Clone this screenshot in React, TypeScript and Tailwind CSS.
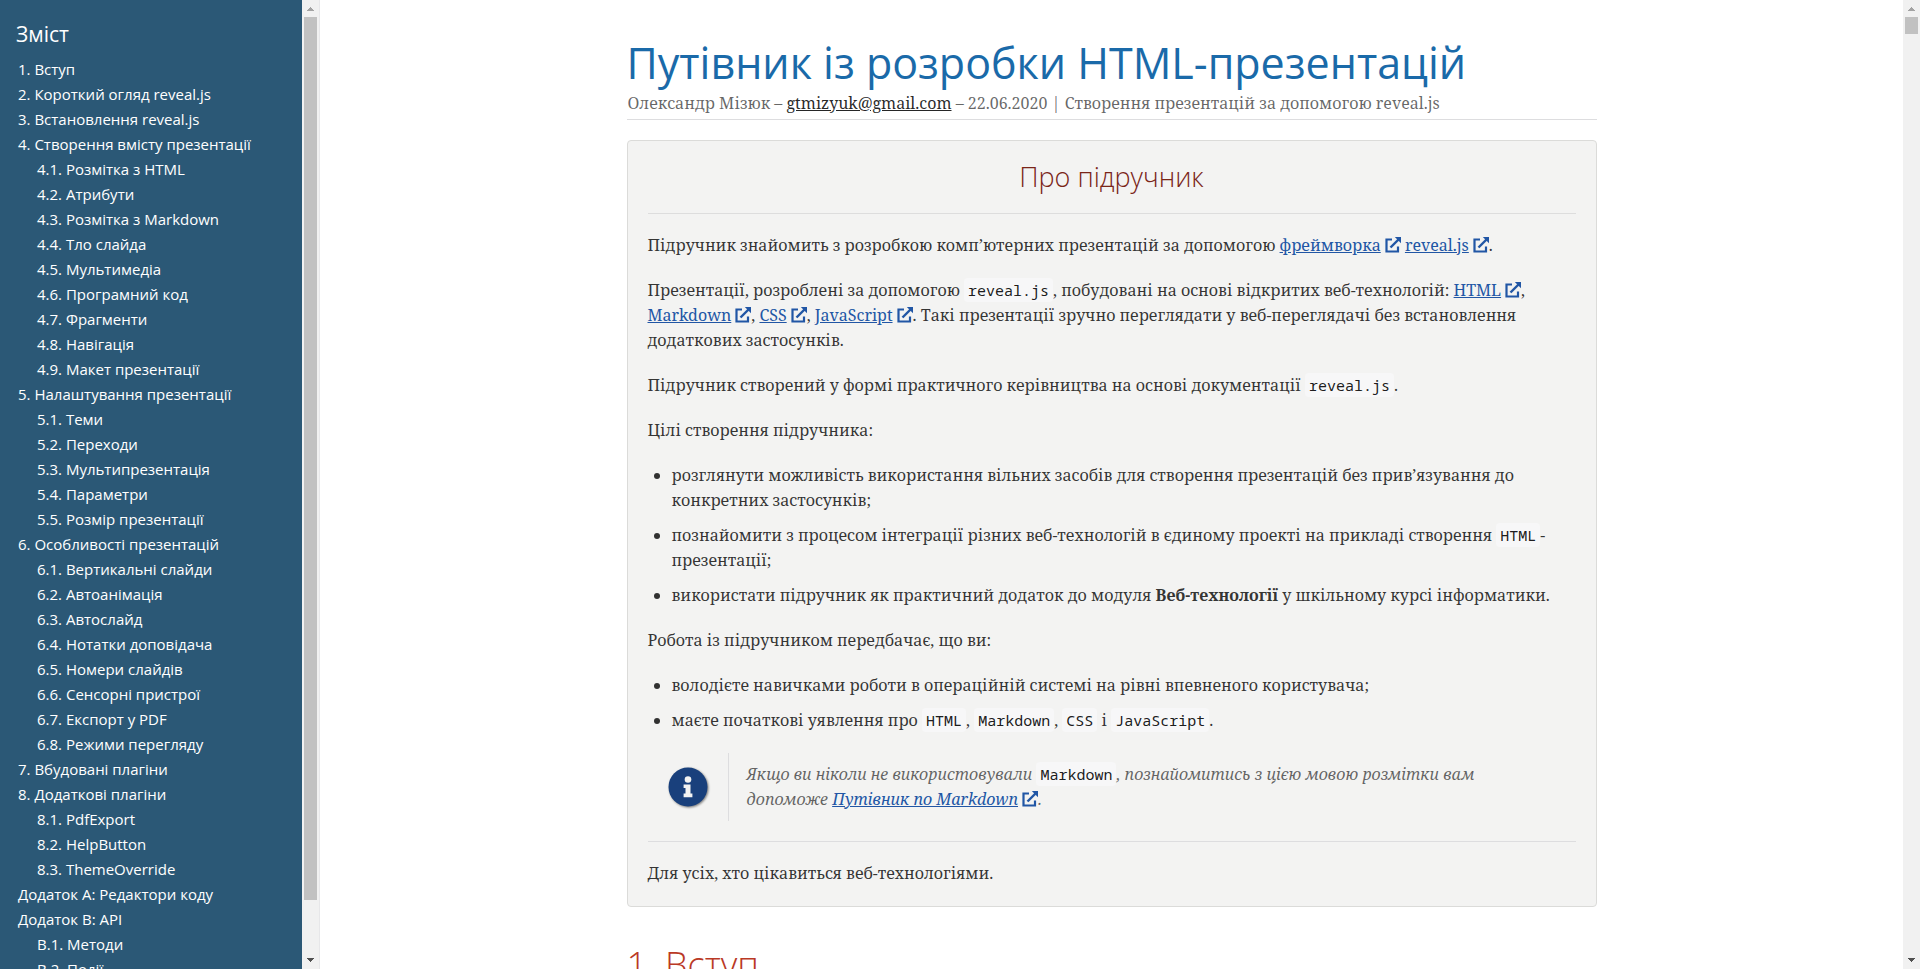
import type { ReactNode } from "react"

type TocItem = {
    title: string
    children?: string[]
}

const toc: TocItem[] = [
    { title: "1. Вступ" },
    { title: "2. Короткий огляд reveal.js" },
    { title: "3. Встановлення reveal.js" },
    {
        title: "4. Створення вмісту презентації",
        children: [
            "4.1. Розмітка з HTML",
            "4.2. Атрибути",
            "4.3. Розмітка з Markdown",
            "4.4. Тло слайда",
            "4.5. Мультимедіа",
            "4.6. Програмний код",
            "4.7. Фрагменти",
            "4.8. Навігація",
            "4.9. Макет презентації",
        ],
    },
    {
        title: "5. Налаштування презентації",
        children: ["5.1. Теми", "5.2. Переходи", "5.3. Мультипрезентація", "5.4. Параметри", "5.5. Розмір презентації"],
    },
    {
        title: "6. Особливості презентацій",
        children: [
            "6.1. Вертикальні слайди",
            "6.2. Автоанімація",
            "6.3. Автослайд",
            "6.4. Нотатки доповідача",
            "6.5. Номери слайдів",
            "6.6. Сенсорні пристрої",
            "6.7. Експорт у PDF",
            "6.8. Режими перегляду",
        ],
    },
    { title: "7. Вбудовані плагіни" },
    { title: "8. Додаткові плагіни", children: ["8.1. PdfExport", "8.2. HelpButton", "8.3. ThemeOverride"] },
    { title: "Додаток A: Редактори коду" },
    { title: "Додаток B: API", children: ["B.1. Методи", "B.2. Події"] },
]

const Code = ({ children }: { children: ReactNode }) => (
    <code className="rounded bg-[#f7f7f8] px-1 py-0.5 font-['Droid_Sans_Mono','Noto_Sans_Mono','DejaVu_Sans_Mono',monospace] text-[15px] leading-4 not-italic text-black/90">
        {children}
    </code>
)

const ExternalIcon = () => (
    <svg viewBox="0 0 16 16" className="ml-1 inline-block size-4 align-[-2px]" fill="none" stroke="currentColor" aria-hidden="true">
        <path d="M7 2.5H1.5v12h11.5V9.5" strokeWidth="2.2" />
        <path d="M5.5 10.5L13.5 2.5" strokeWidth="2.4" />
        <path d="M9.8 0H16v6.2z" fill="currentColor" stroke="none" />
    </svg>
)

const Ext = ({ href, children }: { href: string; children: ReactNode }) => (
    <a href={href} className="whitespace-nowrap text-[#2156a5]">
        <span className="underline">{children}</span>
        <ExternalIcon />
    </a>
)

const InfoIcon = () => (
    <svg viewBox="0 0 40 40" className="size-10 drop-shadow-[1px_1px_1px_rgba(0,0,0,0.5)]" aria-hidden="true">
        <circle cx="20" cy="20" r="19.5" fill="#19407c" />
        <circle cx="20" cy="12.5" r="3.3" fill="#f3f3f2" />
        <path d="M15.6 17.4h6.9v9.2h1.9v3.6h-8.8v-3.6h1.9v-5.6h-1.9z" fill="#f3f3f2" />
    </svg>
)

type ScrollBarProps = {
    thumb: string
    label: string
}

const ScrollBar = ({ thumb, label }: ScrollBarProps) => (
    <div className="flex h-full w-[17px] shrink-0 flex-col items-center bg-[#f1f1f1]" aria-label={label}>
        <svg viewBox="0 0 17 17" className="size-[17px] shrink-0" shapeRendering="crispEdges">
            <path d="M5 11h7L8.5 7z" fill="#a3a3a3" />
        </svg>
        <div className="flex w-full grow flex-col items-center">
            <div className={`w-[13px] bg-[#c1c1c1] ${thumb}`} />
        </div>
        <svg viewBox="0 0 17 17" className="size-[17px] shrink-0" shapeRendering="crispEdges">
            <path d="M5 6h7L8.5 10z" fill="#505050" />
        </svg>
    </div>
)

const Sidebar = () => (
    <aside className="flex w-80 shrink-0 border-r border-[#e7e7e9]">
        <nav className="grow overflow-hidden bg-[#2b5876] px-4 pt-5 font-['Open_Sans',sans-serif] text-white">
            <h2 className="mb-2 text-[21px] leading-[29px]">Зміст</h2>
            <ul className="pl-0.5 text-[15px] leading-[25px]">
                {toc.map((item) => (
                    <li key={item.title}>
                        <a href="#">{item.title}</a>
                        {item.children && (
                            <ul className="pl-[19px]">
                                {item.children.map((child) => (
                                    <li key={child}>
                                        <a href="#">{child}</a>
                                    </li>
                                ))}
                            </ul>
                        )}
                    </li>
                ))}
            </ul>
        </nav>
        <ScrollBar thumb="h-17/18" label="Прокрутка змісту" />
    </aside>
)

const App = () => {
    return (
        <div className="flex h-screen overflow-hidden bg-white">
            <Sidebar />
            <main className="grow overflow-hidden font-['Noto_Serif','DejaVu_Serif_Condensed','DejaVu_Serif',serif] text-base leading-[25px] text-black/80">
                <div className="mx-auto max-w-[1000px] px-[15px]">
                    <header className="mb-5 border-b border-[#dddddf] pb-[3px] pt-[34px]">
                        <h1 className="font-['Open_Sans',sans-serif] text-[43px] font-normal leading-[57px] text-[#1a6aa9]">
                            Путівник із розробки HTML-презентацій
                        </h1>
                        <p className="pl-px text-black/60">
                            Олександр Мізюк – <a href="mailto:gtmizyuk@gmail.com" className="text-black/85 underline">gtmizyuk@gmail.com</a> –
                            22.06.2020 | Створення презентацій за допомогою reveal.js
                        </p>
                    </header>

                    <section className="flex flex-col gap-5 rounded border border-[#dbdbd9] bg-[#f3f3f2] p-5">
                        <h2 className="text-center font-['Open_Sans',sans-serif] text-[27px] font-light leading-8 text-[#7a2518]">Про підручник</h2>
                        <hr className="-mb-px border-[#dddddd]" />
                        <p>
                            Підручник знайомить з розробкою комп’ютерних презентацій за допомогою <Ext href="#">фреймворка</Ext>{" "}
                            <Ext href="#">reveal.js</Ext>.
                        </p>
                        <p>
                            Презентації, розроблені за допомогою <Code>reveal.js</Code>, побудовані на основі відкритих веб-технологій:{" "}
                            <Ext href="#">HTML</Ext>, <Ext href="#">Markdown</Ext>, <Ext href="#">CSS</Ext>, <Ext href="#">JavaScript</Ext>. Такі
                            презентації зручно переглядати у веб-переглядачі без встановлення додаткових застосунків.
                        </p>
                        <p>
                            Підручник створений у формі практичного керівництва на основі документації <Code>reveal.js</Code>.
                        </p>
                        <p>Цілі створення підручника:</p>
                        <ul className="flex list-disc flex-col gap-2.5 pl-6">
                            <li>
                                розглянути можливість використання вільних засобів для створення презентацій без прив’язування до конкретних
                                застосунків;
                            </li>
                            <li>
                                познайомити з процесом інтеграції різних веб-технологій в єдиному проекті на прикладі створення <Code>HTML</Code>
                                -презентації;
                            </li>
                            <li>
                                використати підручник як практичний додаток до модуля <strong className="font-bold">Веб-технології</strong> у
                                шкільному курсі інформатики.
                            </li>
                        </ul>
                        <p>Робота із підручником передбачає, що ви:</p>
                        <ul className="flex list-disc flex-col gap-2.5 pl-6">
                            <li>володієте навичками роботи в операційній системі на рівні впевненого користувача;</li>
                            <li>
                                маєте початкові уявлення про <Code>HTML</Code>, <Code>Markdown</Code>, <Code>CSS</Code> і <Code>JavaScript</Code>.
                            </li>
                        </ul>
                        <div className="flex">
                            <div className="flex w-20 shrink-0 items-center justify-center">
                                <InfoIcon />
                            </div>
                            <p className="border-l border-[#dddddf] py-[9px] pl-[18px] pr-5 italic text-black/60">
                                Якщо ви ніколи не використовували <Code>Markdown</Code>, познайомитись з цією мовою розмітки вам допоможе{" "}
                                <Ext href="#">Путівник по Markdown</Ext>.
                            </p>
                        </div>
                        <hr className="-mb-px border-[#dddddf]" />
                        <p>Для усіх, хто цікавиться веб-технологіями.</p>
                    </section>

                    <h2 className="pt-9 font-['Open_Sans',sans-serif] text-[36px] font-light leading-[43px] text-[#ba3925]">1. Вступ</h2>
                </div>
            </main>
            <ScrollBar thumb="h-[17px]" label="Прокрутка сторінки" />
        </div>
    )
}

export default App
